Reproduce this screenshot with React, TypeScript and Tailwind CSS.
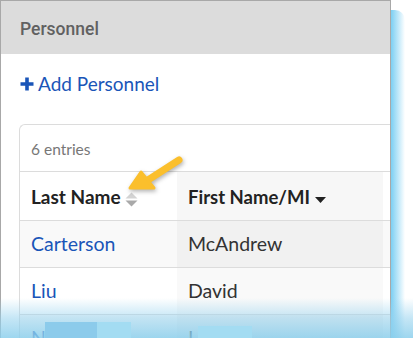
const rows = [
  { last: 'Carterson', first: 'McAndrew', a: 'bg-[#f9f9f9]', b: 'bg-[#f1f1f1]' },
  { last: 'Liu', first: 'David', a: 'bg-white', b: 'bg-[#f9f9f9]' },
  { last: 'N', first: 'L', a: 'bg-[#f9f9f9]', b: 'bg-[#f1f1f1]' },
];

const PlusIcon = () => (
  <svg width="14" height="14" viewBox="0 0 14 14" className="ml-[1px]">
    <path d="M7 0.5 V13.5 M0.5 7 H13.5" stroke="#1a55b8" strokeWidth="3.6" />
  </svg>
);

const SortBoth = () => (
  <svg width="13" height="15" viewBox="0 0 13 15" className="ml-[4px] mt-[4px]">
    <path d="M0.5 6.5 L6.5 0.5 L12.5 6.5 Z" fill="#d3d3d3" />
    <path d="M0.5 8.5 L6.5 14.5 L12.5 8.5 Z" fill="#a9a9a9" />
  </svg>
);

const Arrow = () => (
  <svg
    width="70"
    height="50"
    viewBox="0 0 70 50"
    className="absolute left-[124px] top-[152px] z-20"
    style={{ filter: 'drop-shadow(1px 2px 2px rgba(0,0,0,0.3))' }}
  >
    <path d="M55 8 L24 28" stroke="#fbbf2c" strokeWidth="7" strokeLinecap="round" />
    <path d="M6 36 L17 20 L30 36 Z" fill="#fbbf2c" stroke="#fbbf2c" strokeWidth="3" strokeLinejoin="round" />
  </svg>
);

const App = () => {
  return (
    <div className="relative w-[413px] h-[338px] overflow-hidden bg-white font-['Lato',sans-serif]">
      <div className="w-[391px] h-[338px] border-[1.5px] border-b-0 border-[#a8a8a8] overflow-hidden">
        <div className="h-[53px] bg-[#dcdcdc] flex items-center pl-[19px] pt-[3px] font-['Roboto',sans-serif] text-[17.5px] font-medium text-[#616161]">
          Personnel
        </div>
        <div className="pl-[18px]">
          <div className="h-[70px] flex items-center gap-[4px] text-[#1a55b8] text-[19px] pb-[10px]">
            <PlusIcon />
            <span>Add Personnel</span>
          </div>
          <div className="w-[400px] border border-[#dcdcdc] border-r-0 rounded-tl-md">
            <div className="h-[46px] flex items-center pl-[11px] pt-[4px] text-[15.5px] text-[#777]">6 entries</div>
            <div className="flex h-[49px] border-t border-[#dcdcdc] text-[19px] font-bold text-[#222]">
              <div className="w-[157px] flex items-center pl-[11px] pt-[3px]">
                Last Name
                <SortBoth />
              </div>
              <div className="w-[206px] flex items-center pl-[11px] pt-[3px] bg-[#f7f7f7] text-[18.5px]">
                First Name/MI
                <svg width="11" height="6" viewBox="0 0 11 6" className="ml-[5px] mt-[5px]">
                  <path d="M0 0 L11 0 L5.5 6 Z" fill="#222" />
                </svg>
              </div>
              <div className="flex-1" />
            </div>
            {rows.map((r) => (
              <div key={r.last} className="flex h-[47px] border-t border-[#dcdcdc] text-[19.5px]">
                <div className={`w-[157px] flex items-center pl-[11px] text-[#1a55b8] ${r.a}`}>{r.last}</div>
                <div className={`w-[206px] flex items-center pl-[11px] text-[#333] ${r.b}`}>{r.first}</div>
                <div className={`flex-1 ${r.a}`} />
              </div>
            ))}
          </div>
        </div>
      </div>

      <Arrow />

      <div className="absolute left-[391px] top-[10px] bottom-0 w-[14px] rounded-tr-[10px] bg-gradient-to-r from-[#7ccff3] to-transparent" />

      <div className="absolute left-0 right-0 top-[298px] bottom-0 bg-gradient-to-b from-[rgba(160,215,240,0)] via-[rgba(150,210,238,0.55)] to-[rgba(140,207,236,0.85)]" />
      <div className="absolute left-[45px] top-[322px] w-[52px] h-[16px] bg-[#8ccbeb]" />
      <div className="absolute left-[97px] top-[322px] w-[34px] h-[16px] bg-[#a3dcf2]" />
      <div className="absolute left-[198px] top-[326px] w-[54px] h-[12px] bg-[#a3dcf2]" />
    </div>
  );
};

export default App;
